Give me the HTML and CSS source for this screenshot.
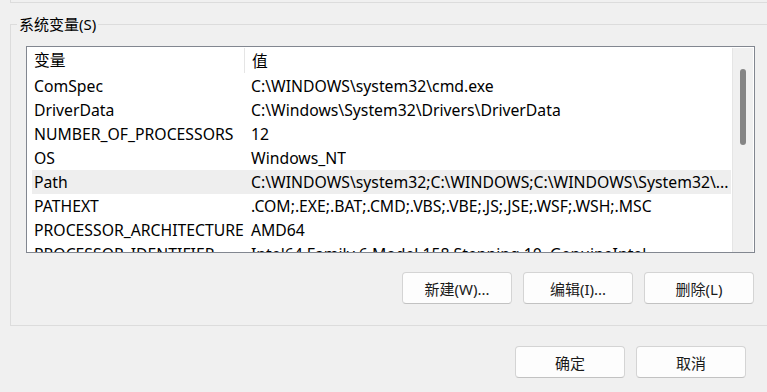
FILE: index.html
```html
<!DOCTYPE html>
<html lang="zh-CN">
<head>
    <meta charset="UTF-8">
    <meta name="viewport" content="width=device-width, initial-scale=1.0">
    <title>环境变量</title>
    <link rel="stylesheet" href="styles.css">
</head>
<body>

    <div class="dialog">
        <div class="user-group"></div>

        <fieldset class="group">
            <legend>系统变量(S)</legend>
            <div class="group-body">
                <div class="list">
                    <div class="list-main">
                        <div class="list-head">
                            <div class="col-name">变量</div>
                            <div class="col-value">值</div>
                        </div>
                        <div class="list-rows">
                            <div class="row"><div class="col-name">ComSpec</div><div class="col-value">C:\WINDOWS\system32\cmd.exe</div></div>
                            <div class="row"><div class="col-name">DriverData</div><div class="col-value">C:\Windows\System32\Drivers\DriverData</div></div>
                            <div class="row"><div class="col-name">NUMBER_OF_PROCESSORS</div><div class="col-value">12</div></div>
                            <div class="row"><div class="col-name">OS</div><div class="col-value">Windows_NT</div></div>
                            <div class="row selected"><div class="col-name">Path</div><div class="col-value">C:\WINDOWS\system32;C:\WINDOWS;C:\WINDOWS\System32\...</div></div>
                            <div class="row"><div class="col-name">PATHEXT</div><div class="col-value">.COM;.EXE;.BAT;.CMD;.VBS;.VBE;.JS;.JSE;.WSF;.WSH;.MSC</div></div>
                            <div class="row"><div class="col-name">PROCESSOR_ARCHITECTURE</div><div class="col-value">AMD64</div></div>
                            <div class="row"><div class="col-name">PROCESSOR_IDENTIFIER</div><div class="col-value">Intel64 Family 6 Model 158 Stepping 10, GenuineIntel</div></div>
                        </div>
                    </div>
                    <div class="scrollbar">
                        <div class="thumb"></div>
                    </div>
                </div>

                <div class="button-row">
                    <button class="win-button">新建(W)...</button>
                    <button class="win-button">编辑(I)...</button>
                    <button class="win-button">删除(L)</button>
                </div>
            </div>
        </fieldset>

        <div class="footer">
            <button class="win-button">确定</button>
            <button class="win-button">取消</button>
        </div>
    </div>

</body>
</html>
```

FILE: styles.css
```css
body {
    margin: 0;
    background-color: #f0f0f0;
    font-family: "Noto Sans", "Noto Sans CJK SC", sans-serif;
    font-size: 15.75px;
    color: #000000;
    overflow: hidden;
}
.dialog {
    padding-left: 10px;
}
.user-group {
    height: 2px;
    margin-right: -20px;
    border: 1px solid #dcdcdc;
    border-top: none;
}
.group {
    margin: 11px -20px 0 0;
    padding: 12px 0 21px 15px;
    border: 1px solid #dcdcdc;
}
.group legend {
    margin-left: -9px;
    padding: 0 2px;
    font-size: 15px;
    line-height: 20px;
}
.group-body {
    width: 729px;
}
.list {
    display: flex;
    height: 205px;
    border: 1px solid #828790;
    background-color: #ffffff;
}
.list-main {
    flex: 1;
    padding-left: 5px;
    overflow: hidden;
}
.list-head {
    display: flex;
    height: 27px;
    align-items: center;
}
.list-head .col-name {
    height: 25px;
    line-height: 25px;
    border-right: 1px solid #e5e5e5;
}
.row {
    display: flex;
    height: 24px;
    align-items: center;
    white-space: nowrap;
}
.row.selected {
    background-color: #eeeeee;
}
.col-name {
    width: 210px;
    padding-left: 2px;
    flex-shrink: 0;
}
.col-value {
    padding-left: 7px;
    overflow: hidden;
}
.scrollbar {
    width: 20px;
    margin: 1px 1px 0 1px;
    background-color: #f0f0f0;
    border-left: 1px solid #e5e5e5;
    position: relative;
}
.thumb {
    position: absolute;
    left: 7px;
    top: 21px;
    width: 6px;
    height: 76px;
    border-radius: 3px;
    background-color: #858585;
}
.button-row {
    display: flex;
    justify-content: flex-end;
    gap: 11px;
    margin-top: 19px;
    padding-right: 1px;
}
.win-button {
    width: 110px;
    height: 32px;
    padding: 0;
    font-family: inherit;
    font-size: 15px;
    color: #1a1a1a;
    background-color: #fdfdfd;
    border: 1px solid #d4d4d4;
    border-bottom-color: #c2c2c2;
    border-radius: 4px;
}
.footer {
    display: flex;
    justify-content: flex-end;
    gap: 11px;
    margin-top: 20px;
    padding-right: 21px;
}
```
